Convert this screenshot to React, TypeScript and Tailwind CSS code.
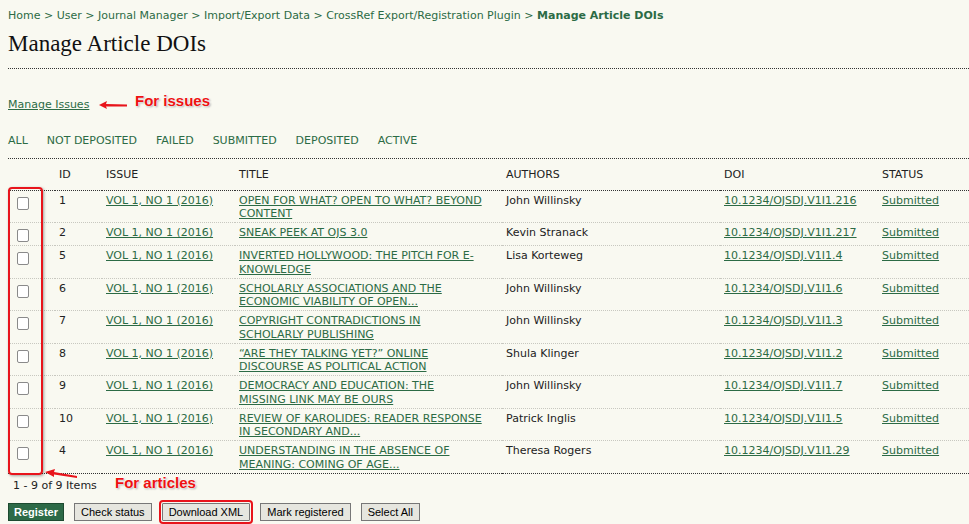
const rows = [
  { id: "1", title: ["OPEN FOR WHAT? OPEN TO WHAT? BEYOND", "CONTENT"], author: "John Willinsky", doi: "10.1234/OJSDJ.V1I1.216" },
  { id: "2", title: ["SNEAK PEEK AT OJS 3.0"], author: "Kevin Stranack", doi: "10.1234/OJSDJ.V1I1.217" },
  { id: "5", title: ["INVERTED HOLLYWOOD: THE PITCH FOR E-", "KNOWLEDGE"], author: "Lisa Korteweg", doi: "10.1234/OJSDJ.V1I1.4" },
  { id: "6", title: ["SCHOLARLY ASSOCIATIONS AND THE", "ECONOMIC VIABILITY OF OPEN..."], author: "John Willinsky", doi: "10.1234/OJSDJ.V1I1.6" },
  { id: "7", title: ["COPYRIGHT CONTRADICTIONS IN", "SCHOLARLY PUBLISHING"], author: "John Willinsky", doi: "10.1234/OJSDJ.V1I1.3" },
  { id: "8", title: ["\u201CARE THEY TALKING YET?\u201D ONLINE", "DISCOURSE AS POLITICAL ACTION"], author: "Shula Klinger", doi: "10.1234/OJSDJ.V1I1.2" },
  { id: "9", title: ["DEMOCRACY AND EDUCATION: THE", "MISSING LINK MAY BE OURS"], author: "John Willinsky", doi: "10.1234/OJSDJ.V1I1.7" },
  { id: "10", title: ["REVIEW OF KAROLIDES: READER RESPONSE", "IN SECONDARY AND..."], author: "Patrick Inglis", doi: "10.1234/OJSDJ.V1I1.5" },
  { id: "4", title: ["UNDERSTANDING IN THE ABSENCE OF", "MEANING: COMING OF AGE..."], author: "Theresa Rogers", doi: "10.1234/OJSDJ.V1I1.29" },
];

const filters = ["ALL", "NOT DEPOSITED", "FAILED", "SUBMITTED", "DEPOSITED", "ACTIVE"];

function Arrow({ className }: { className: string }) {
  return (
    <svg className={className} viewBox="0 0 30 10" width="30" height="10">
      <path d="M1 5 L9 1 L8 4 L29 4.5 L29 6.5 L8 6.5 L9 9 Z" fill="#e8141b" />
    </svg>
  );
}

function Note({ text, className }: { text: string; className: string }) {
  return (
    <span
      className={`absolute text-[15px] font-bold text-[#ee1111] [font-family:'Liberation_Sans',Arial,sans-serif] ${className}`}
      style={{ textShadow: "0 0 2px #fff, 0 0 2px #fff, 1px 1px 2px #999" }}
    >
      {text}
    </span>
  );
}

export default function App() {
  const link = "text-[#2c6b45] underline";
  const btn = "border border-[#777] bg-[#e6e6df] px-[6px] py-[1px] text-black";
  const cell = "pb-[1px] pl-[4px] pt-[3px]";
  return (
    <div className="relative min-h-[524px] overflow-hidden bg-[#f9f9f1] pl-2 text-[11px] leading-[14px] text-[#222] [font-family:'DejaVu_Sans',Verdana,sans-serif]">
      <div className="pt-[9px] text-[#2c6b45]">
        Home &gt; User &gt; Journal Manager &gt; Import/Export Data &gt; CrossRef Export/Registration Plugin &gt;{" "}
        <span className="font-bold">Manage Article DOIs</span>
      </div>
      <h1 className="mt-[8px] text-[23px] leading-[26px] text-[#111] [font-family:'Liberation_Serif',Georgia,serif]">
        Manage Article DOIs
      </h1>
      <div className="mt-[11px] border-b border-dotted border-[#333]" />

      <div className="relative mt-[29px] flex items-center">
        <span className={link}>Manage Issues</span>
        <Arrow className="ml-[9px]" />
        <Note text="For issues" className="left-[127px] top-[-4px]" />
      </div>

      <div className="mt-[22px] flex gap-[19px] text-[#2c6b45]">
        {filters.map((f) => (
          <span key={f}>{f}</span>
        ))}
      </div>
      <div className="mt-[10px] border-b border-dotted border-[#333]" />

      <table className="w-[961px] table-fixed border-collapse">
        <colgroup>
          <col className="w-[47px]" />
          <col className="w-[47px]" />
          <col className="w-[133px]" />
          <col className="w-[267px]" />
          <col className="w-[218px]" />
          <col className="w-[158px]" />
          <col />
        </colgroup>
        <thead>
          <tr className="border-b border-dotted border-[#333] text-left">
            <th className="h-[31px] pt-[2px] font-normal" />
            <th className="pl-[4px] pt-[2px] font-normal">ID</th>
            <th className="pl-[4px] pt-[2px] font-normal">ISSUE</th>
            <th className="pl-[4px] pt-[2px] font-normal">TITLE</th>
            <th className="pl-[4px] pt-[2px] font-normal">AUTHORS</th>
            <th className="pl-[4px] pt-[2px] font-normal">DOI</th>
            <th className="pl-[4px] pt-[2px] font-normal">STATUS</th>
          </tr>
        </thead>
        <tbody className="leading-[13.75px]">
          {rows.map((r, i) => (
            <tr
              key={r.id}
              className={
                i === rows.length - 1
                  ? "border-b border-dotted border-[#333] align-top"
                  : "border-b border-dotted border-[#c8c8c0] align-top"
              }
            >
              <td className="pb-[1px] pt-[3px]">
                <div className="mb-[2px] mt-[3px] ml-[9px] h-[13px] w-[12px] rounded-[2px] border border-[#8a8a8a] bg-white" />
              </td>
              <td className={cell}>{r.id}</td>
              <td className={cell}>
                <span className={link}>VOL 1, NO 1 (2016)</span>
              </td>
              <td className={cell}>
                <span className={link}>
                  {r.title[0]}
                  {r.title[1] && <br />}
                  {r.title[1]}
                </span>
              </td>
              <td className={cell}>{r.author}</td>
              <td className={cell}>
                <span className={link}>{r.doi}</span>
              </td>
              <td className={cell}>
                <span className={link}>Submitted</span>
              </td>
            </tr>
          ))}
        </tbody>
      </table>

      <div className="relative mt-[5px] pl-[5px]">
        1 - 9 of 9 Items
        <Note text="For articles" className="left-[107px] top-[-3px]" />
      </div>

      <div className="mt-[10px] flex items-center gap-[10px] text-[11px] leading-[14px] [font-family:'Liberation_Sans',Arial,sans-serif]">
        <button className="border border-[#1d4a30] bg-[#2d6a47] px-[5px] py-[1px] font-bold text-white">Register</button>
        <button className={btn}>Check status</button>
        <button className={`${btn} rounded-[1px] outline-2 outline-offset-[1px] outline-[#e8141b]`}>Download XML</button>
        <button className={btn}>Mark registered</button>
        <button className={btn}>Select All</button>
      </div>

      {/* overlay annotations */}
      <div className="pointer-events-none absolute left-[8px] top-[187px] h-[288px] w-[35px] rounded-[4px] border-2 border-[#e8141b] shadow-[1px_1px_3px_rgba(0,0,0,0.35)]" />
      <svg className="pointer-events-none absolute left-[44px] top-[467px]" width="66" height="16" viewBox="0 0 66 16">
        <path d="M1 5 L11 2 L10 5 L33 9 L33 11 L10 7.5 L10 10 Z" fill="#e8141b" />
      </svg>
    </div>
  );
}
